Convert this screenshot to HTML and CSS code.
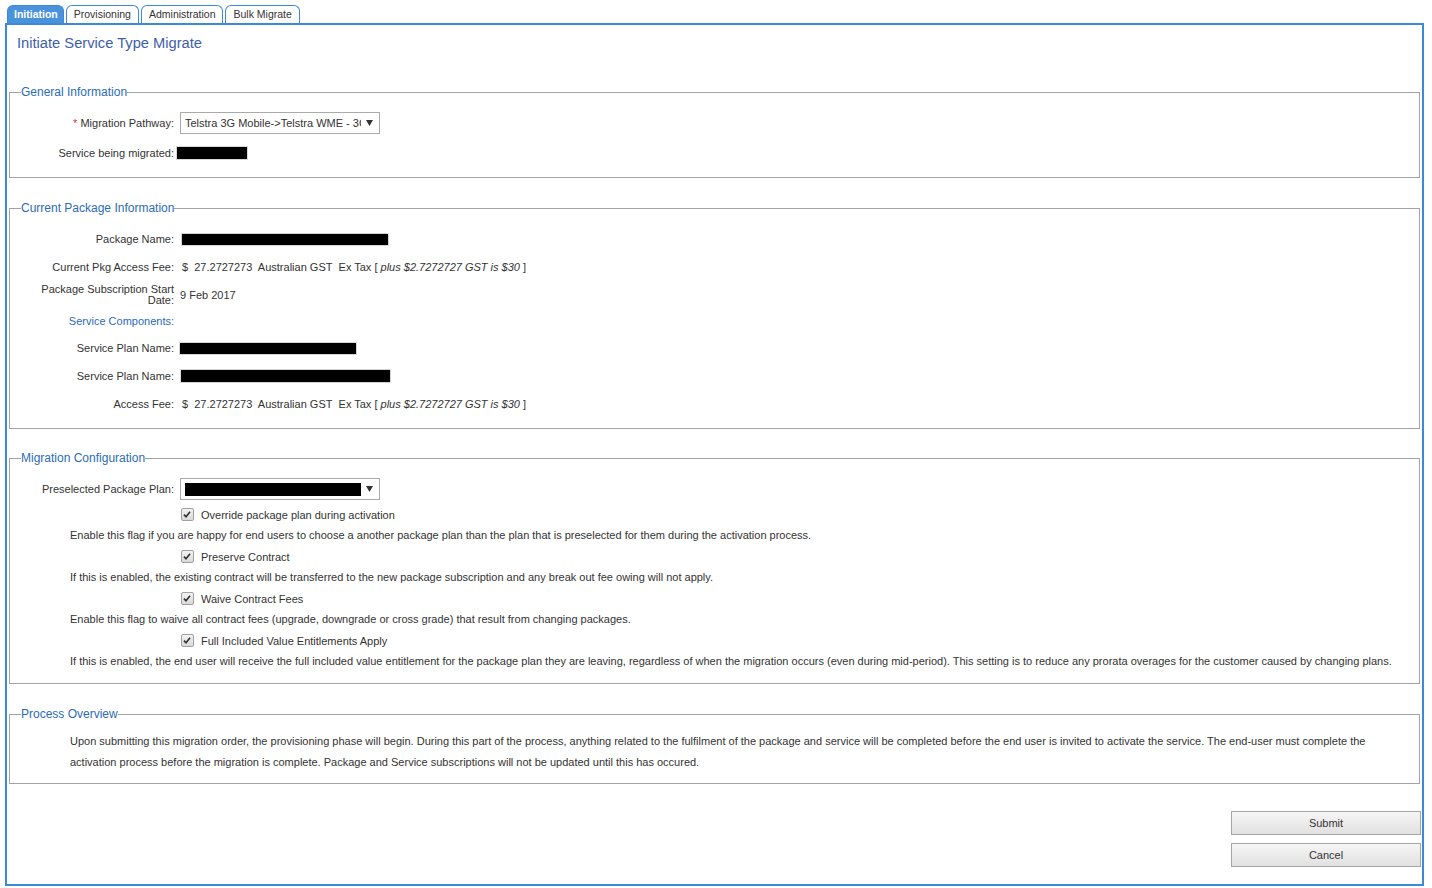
FILE: index.html
```html
<!DOCTYPE html>
<html lang="en">
<head>
    <meta charset="UTF-8">
    <title>Initiate Service Type Migrate</title>
    <link rel="stylesheet" href="styles.css">
</head>
<body>
    <div class="tabs">
        <a class="tab active">Initiation</a>
        <a class="tab">Provisioning</a>
        <a class="tab">Administration</a>
        <a class="tab">Bulk Migrate</a>
    </div>

    <div class="panel">
        <h1 class="page-title">Initiate Service Type Migrate</h1>

        <fieldset class="group group-general">
            <legend>General Information</legend>
            <div class="row">
                <label class="field-label"><span class="req">*</span> Migration Pathway:</label>
                <div class="field-value">
                    <div class="select">
                        <span class="select-text">Telstra 3G Mobile-&gt;Telstra WME - 3G</span>
                        <svg class="select-arrow" width="7" height="6" viewBox="0 0 7 6"><path d="M0 0 L7 0 L3.5 6 Z" fill="#333"/></svg>
                    </div>
                </div>
            </div>
            <div class="row">
                <label class="field-label">Service being migrated:</label>
                <div class="field-value"><span class="redact redact-service"></span></div>
            </div>
        </fieldset>

        <fieldset class="group group-package">
            <legend>Current Package Information</legend>
            <div class="row">
                <label class="field-label">Package Name:</label>
                <div class="field-value"><span class="redact redact-package"></span></div>
            </div>
            <div class="row">
                <label class="field-label">Current Pkg Access Fee:</label>
                <div class="field-value fee">$&nbsp; 27.2727273&nbsp; Australian GST&nbsp; Ex Tax [ <i>plus $2.7272727 GST is $30</i> ]</div>
            </div>
            <div class="row">
                <label class="field-label">Package Subscription Start Date:</label>
                <div class="field-value">9 Feb 2017</div>
            </div>
            <div class="row row-short">
                <label class="field-label blue">Service Components:</label>
            </div>
            <div class="row">
                <label class="field-label">Service Plan Name:</label>
                <div class="field-value"><span class="redact redact-plan1"></span></div>
            </div>
            <div class="row">
                <label class="field-label">Service Plan Name:</label>
                <div class="field-value"><span class="redact redact-plan2"></span></div>
            </div>
            <div class="row">
                <label class="field-label">Access Fee:</label>
                <div class="field-value fee">$&nbsp; 27.2727273&nbsp; Australian GST&nbsp; Ex Tax [ <i>plus $2.7272727 GST is $30</i> ]</div>
            </div>
        </fieldset>

        <fieldset class="group group-config">
            <legend>Migration Configuration</legend>
            <div class="row row-tall">
                <label class="field-label">Preselected Package Plan:</label>
                <div class="field-value">
                    <div class="select">
                        <span class="select-text"><span class="redact redact-select"></span></span>
                        <svg class="select-arrow" width="7" height="6" viewBox="0 0 7 6"><path d="M0 0 L7 0 L3.5 6 Z" fill="#333"/></svg>
                    </div>
                </div>
            </div>

            <div class="check-row">
                <span class="checkbox"><svg width="13" height="13" viewBox="0 0 13 13"><path d="M3.2 6.6 L5.4 8.9 L9.8 3.6" fill="none" stroke="#333" stroke-width="1.8"/></svg></span>
                <span>Override package plan during activation</span>
            </div>
            <div class="note">Enable this flag if you are happy for end users to choose a another package plan than the plan that is preselected for them during the activation process.</div>

            <div class="check-row">
                <span class="checkbox"><svg width="13" height="13" viewBox="0 0 13 13"><path d="M3.2 6.6 L5.4 8.9 L9.8 3.6" fill="none" stroke="#333" stroke-width="1.8"/></svg></span>
                <span>Preserve Contract</span>
            </div>
            <div class="note">If this is enabled, the existing contract will be transferred to the new package subscription and any break out fee owing will not apply.</div>

            <div class="check-row">
                <span class="checkbox"><svg width="13" height="13" viewBox="0 0 13 13"><path d="M3.2 6.6 L5.4 8.9 L9.8 3.6" fill="none" stroke="#333" stroke-width="1.8"/></svg></span>
                <span>Waive Contract Fees</span>
            </div>
            <div class="note">Enable this flag to waive all contract fees (upgrade, downgrade or cross grade) that result from changing packages.</div>

            <div class="check-row">
                <span class="checkbox"><svg width="13" height="13" viewBox="0 0 13 13"><path d="M3.2 6.6 L5.4 8.9 L9.8 3.6" fill="none" stroke="#333" stroke-width="1.8"/></svg></span>
                <span>Full Included Value Entitlements Apply</span>
            </div>
            <div class="note">If this is enabled, the end user will receive the full included value entitlement for the package plan they are leaving, regardless of when the migration occurs (even during mid-period). This setting is to reduce any prorata overages for the customer caused by changing plans.</div>
        </fieldset>

        <fieldset class="group group-process">
            <legend>Process Overview</legend>
            <p class="overview">Upon submitting this migration order, the provisioning phase will begin. During this part of the process, anything related to the fulfilment of the package and service will be completed before the end user is invited to activate the service. The end-user must complete the activation process before the migration is complete. Package and Service subscriptions will not be updated until this has occured.</p>
        </fieldset>

        <div class="actions">
            <button class="btn">Submit</button>
            <button class="btn">Cancel</button>
        </div>
    </div>
</body>
</html>
```

FILE: styles.css
```css
body {
    margin: 4px 8px 0 5px;
    font-family: "Liberation Sans", Arial, sans-serif;
    font-size: 11px;
    color: #333;
    background: #fff;
}

/* tabs */
.tabs {
    display: flex;
    align-items: flex-end;
    gap: 2px;
    height: 19px;
    margin-left: 2px;
}

.tab {
    box-sizing: border-box;
    height: 18px;
    padding: 0 7px;
    font-size: 10.5px;
    line-height: 17px;
    border: 1px solid #3b8ad9;
    border-bottom: none;
    border-radius: 6px 6px 0 0;
    background: #fff;
    color: #333;
    cursor: pointer;
}

.tab.active {
    background: #4a93dc;
    color: #fff;
    font-weight: bold;
    padding: 0 5px 0 6px;
}

/* main panel */
.panel {
    border: 2px solid #3b8ad9;
    padding: 9px 0 17px 0;
}

.page-title {
    margin: 0 0 33px 10px;
    font-size: 14.7px;
    font-weight: normal;
    line-height: 18px;
    color: #3d5ea9;
}

.group {
    margin: 0 2px 23px;
    padding: 0;
    border: 1px solid #a3a3a3;
    min-width: 0;
}

.group legend {
    margin-left: 11px;
    padding: 0;
    font-size: 12px;
    line-height: 14px;
    color: #2b6cb8;
}

.group-general { padding: 9px 0; }
.group-package { padding: 10px 0; margin-bottom: 22px; }
.group-config { padding: 9px 0 11px; }
.group-process { padding: 10px 0; margin-bottom: 27px; }

.group-general .row { height: 30px; }

.row {
    display: flex;
    align-items: center;
    height: 28px;
}

.row-short { height: 25px; }
.row-tall { height: 30px; }

.field-label {
    flex-shrink: 0;
    width: 136px;
    margin-left: 28px;
    text-align: right;
    line-height: 11px;
}

.field-label.blue { color: #2b6cb8; }

.req { color: #d9342b; }

.field-value {
    margin-left: 6px;
    display: flex;
    align-items: center;
}

.field-value.fee {
    display: block;
    padding-left: 2px;
    white-space: nowrap;
}

.redact {
    display: inline-block;
    background: #000;
    border: 1px solid #d6d6d6;
    height: 11px;
}

.redact-service { width: 70px; height: 12px; margin-left: -4px; }
.redact-package { width: 206px; margin-left: 1px; }
.redact-plan1 { width: 176px; margin-left: -1px; }
.redact-plan2 { width: 209px; height: 12px; }
.redact-select { width: 176px; height: 13px; border: none; }

/* select */
.select {
    box-sizing: border-box;
    display: flex;
    align-items: center;
    width: 200px;
    height: 22px;
    padding: 0 6px 0 4px;
    border: 1px solid #aaa;
    background: #fff;
}

.select-text {
    width: 176px;
    overflow: hidden;
    white-space: nowrap;
    display: flex;
    align-items: center;
}

.select-arrow {
    margin-left: auto;
}

/* checkboxes */
.check-row {
    display: flex;
    align-items: center;
    gap: 7px;
    height: 21px;
    padding-left: 171px;
}

.checkbox {
    box-sizing: border-box;
    display: inline-flex;
    width: 13px;
    height: 13px;
    border: 1px solid #a0a0a0;
    border-radius: 2px;
    background: linear-gradient(#f3f3f3, #d9d9d9);
    overflow: hidden;
}

.checkbox svg { margin: -1px 0 0 -1px; }

.note {
    height: 21px;
    line-height: 21px;
    padding: 0 16px 0 60px;
    white-space: nowrap;
}

.overview {
    margin: 0;
    padding: 0 16px 0 60px;
    line-height: 21px;
}

/* buttons */
.actions {
    display: flex;
    flex-direction: column;
    align-items: flex-end;
    gap: 8px;
    margin-right: 1px;
}

.btn {
    width: 190px;
    height: 24px;
    border: 1px solid #a5a5a5;
    background: linear-gradient(#f5f5f5, #e1e1e1);
    font-family: "Liberation Sans", Arial, sans-serif;
    font-size: 11px;
    color: #333;
    cursor: pointer;
}

.btn:hover {
    background: linear-gradient(#fafafa, #e8e8e8);
}
```
